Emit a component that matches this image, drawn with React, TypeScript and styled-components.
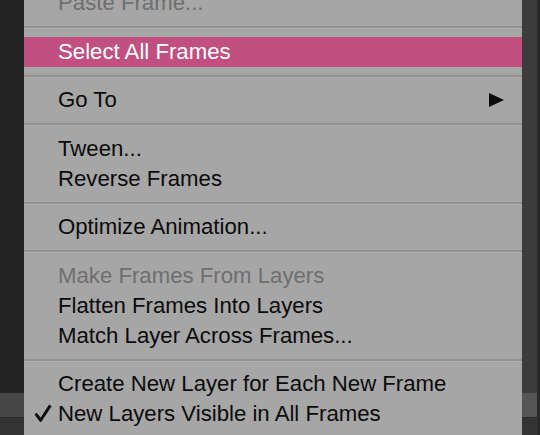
import React from 'react';
import styled, {createGlobalStyle} from 'styled-components';

const GlobalStyle = createGlobalStyle`
    html, body {
        margin: 0;
        padding: 0;
        background: #232323;
        overflow: hidden;
    }
    #root {
        width: 540px;
        height: 435px;
    }
`

type Item =
    | {kind: 'sep'}
    | {kind: 'item'; label: string; disabled?: boolean; active?: boolean; submenu?: boolean; checked?: boolean};

const items: Item[] = [
    {kind: 'item', label: 'Paste Frame...', disabled: true},
    {kind: 'sep'},
    {kind: 'item', label: 'Select All Frames', active: true},
    {kind: 'sep'},
    {kind: 'item', label: 'Go To', submenu: true},
    {kind: 'sep'},
    {kind: 'item', label: 'Tween...'},
    {kind: 'item', label: 'Reverse Frames'},
    {kind: 'sep'},
    {kind: 'item', label: 'Optimize Animation...'},
    {kind: 'sep'},
    {kind: 'item', label: 'Make Frames From Layers', disabled: true},
    {kind: 'item', label: 'Flatten Frames Into Layers'},
    {kind: 'item', label: 'Match Layer Across Frames...'},
    {kind: 'sep'},
    {kind: 'item', label: 'Create New Layer for Each New Frame'},
    {kind: 'item', label: 'New Layers Visible in All Frames', checked: true},
];

const CheckIcon = () => (
    <svg width="18" height="18" viewBox="0 0 18 18">
        <path d="M1.6 9.6 L6.6 16.2 L16.4 1.4" fill="none" stroke="#0a0a0a" strokeWidth="2.9"
              strokeLinejoin="miter" strokeLinecap="butt"/>
    </svg>
)

export default function App() {
    return (
        <>
            <GlobalStyle/>
            <Screen>
                <Backdrop>
                    <LeftPane>
                        <PaneTop tone={'#232323'}/>
                        <PaneBand tone={'#464646'}/>
                        <PaneBottom tone={'#333333'}/>
                    </LeftPane>
                    <RightPane>
                        <PaneTop tone={'#3c3c3c'}/>
                        <PaneBand tone={'#555555'}/>
                        <PaneBottom tone={'#343434'}/>
                    </RightPane>
                </Backdrop>

                <Menu>
                    {items.map((item, i) =>
                        item.kind === 'sep' ? (
                            <Separator key={i}/>
                        ) : (
                            <Row key={i} active={item.active} disabled={item.disabled}>
                                <CheckSlot>{item.checked && <CheckIcon/>}</CheckSlot>
                                <Label>{item.label}</Label>
                                {item.submenu && <Arrow/>}
                            </Row>
                        )
                    )}
                </Menu>
            </Screen>
        </>
    );
}

const Screen = styled.div`
    position: relative;
    width: 540px;
    height: 435px;
    overflow: hidden;
    font-family: "Liberation Sans", Arial, sans-serif;
`
const Backdrop = styled.div`
    display: flex;
    width: 100%;
    height: 100%;
`
const LeftPane = styled.div`
    display: flex;
    flex-direction: column;
    width: 300px;
`
const RightPane = styled.div`
    display: flex;
    flex-direction: column;
    flex: 1;
    border-right: 3px solid #2a2a2a;
`
const PaneTop = styled.div<{tone: string}>`
    height: 393px;
    background: ${p => p.tone};
`
const PaneBand = styled.div<{tone: string}>`
    height: 24px;
    background: ${p => p.tone};
    border-bottom: 1px solid #2b2b2b;
`
const PaneBottom = styled.div<{tone: string}>`
    flex: 1;
    background: ${p => p.tone};
`
const Menu = styled.div`
    position: absolute;
    left: 24px;
    top: -12px;
    width: 498px;
    height: 460px;
    background: #a6a6a6;
    display: flex;
    flex-direction: column;
`
const Row = styled.div<{active?: boolean; disabled?: boolean}>`
    display: flex;
    align-items: center;
    height: 30px;
    flex-shrink: 0;
    padding: 0 18px 0 10px;
    font-size: 22.2px;
    line-height: 30px;
    background: ${p => p.active ? '#c14f80' : 'transparent'};
    color: ${p => p.active ? '#ffffff' : p.disabled ? '#6f6f6f' : '#0b0b0b'};
`
const CheckSlot = styled.div`
    display: flex;
    align-items: center;
    width: 24px;
    height: 30px;
    padding-bottom: 3px;
    box-sizing: border-box;
`
const Label = styled.span`
    flex: 1;
    white-space: nowrap;
`
const Arrow = styled.span`
    width: 0;
    height: 0;
    margin-top: -1px;
    border-top: 7.5px solid transparent;
    border-bottom: 7.5px solid transparent;
    border-left: 15px solid #0b0b0b;
`
const Separator = styled.div`
    height: 18.5px;
    flex-shrink: 0;
    display: flex;
    flex-direction: column;
    justify-content: center;

    &::before {
        content: '';
        display: block;
        height: 2px;
        background: #929292;
        border-bottom: 1px solid #b0b0b0;
        margin-top: 1px;
    }
`
